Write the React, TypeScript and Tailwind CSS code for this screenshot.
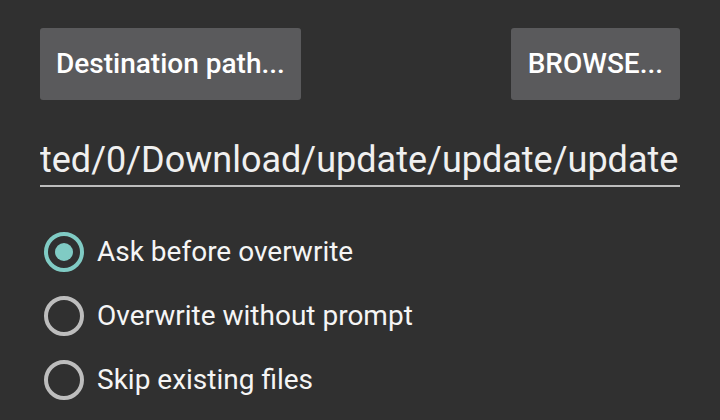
import React, { useState } from 'react';

const options = ['Ask before overwrite', 'Overwrite without prompt', 'Skip existing files'];

const RadioRow: React.FC<{ label: string; checked: boolean; onSelect: () => void }> = ({ label, checked, onSelect }) => {
  return (
    <div onClick={onSelect} className="flex items-center h-16 cursor-pointer">
      <div className="w-12 flex justify-center">
        <div
          className={`w-10 h-10 rounded-full border-4 flex items-center justify-center ${checked ? 'border-[#80cbc4]' : 'border-[#bdbdbd]'}`}
        >
          {checked && <div className="w-[18px] h-[18px] rounded-full bg-[#80cbc4]" />}
        </div>
      </div>
      <span className="ml-[9px] text-[28px] text-[#f5f5f5]">{label}</span>
    </div>
  );
};

export default function App() {
  const [selected, setSelected] = useState(0);

  return (
    <div className="w-[720px] h-[420px] bg-[#303030] overflow-hidden px-10 pt-[28px] font-['Roboto',sans-serif]">
      <div className="flex justify-between">
        <button className="h-[72px] px-[16px] rounded-[3px] bg-[#5a5a5c] text-white text-[28px] font-medium">
          Destination path...
        </button>
        <button className="h-[72px] px-[17px] rounded-[3px] bg-[#5a5a5c] text-white text-[28px] font-medium">
          BROWSE...
        </button>
      </div>

      <div className="mt-[39px] pb-[4px] border-b-2 border-[#bdbdbd] overflow-hidden">
        <div className="whitespace-nowrap text-[36px] leading-[42px] text-[#f0f0f0]">
          ted/0/Download/update/update/update
        </div>
      </div>

      <div className="mt-[33px]">
        {options.map((opt, i) => (
          <RadioRow key={opt} label={opt} checked={selected === i} onSelect={() => setSelected(i)} />
        ))}
      </div>
    </div>
  );
}
